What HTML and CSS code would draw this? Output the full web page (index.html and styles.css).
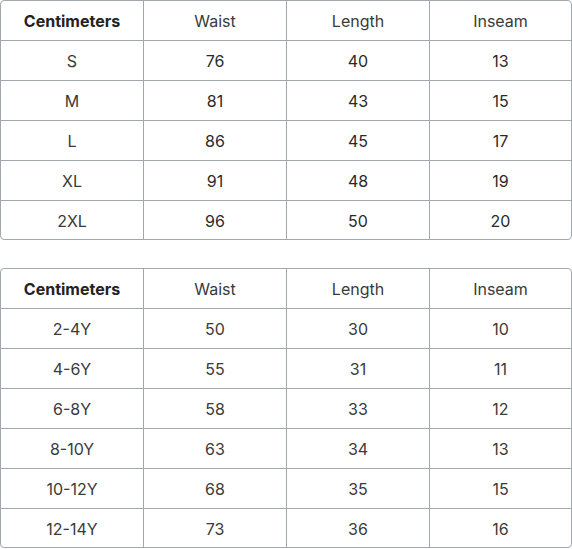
FILE: index.html
```html
<!DOCTYPE html>
<html>
<head>
<meta charset="utf-8">
<link rel="stylesheet" href="styles.css">
</head>
<body>
<div class="page">
  <div class="size-table strong">
    <div class="row head"><div class="cell first">Centimeters</div><div class="cell">Waist</div><div class="cell">Length</div><div class="cell">Inseam</div></div>
    <div class="row"><div class="cell">S</div><div class="cell num">76</div><div class="cell num">40</div><div class="cell num">13</div></div>
    <div class="row"><div class="cell">M</div><div class="cell num">81</div><div class="cell num">43</div><div class="cell num">15</div></div>
    <div class="row"><div class="cell">L</div><div class="cell num">86</div><div class="cell num">45</div><div class="cell num">17</div></div>
    <div class="row"><div class="cell">XL</div><div class="cell num">91</div><div class="cell num">48</div><div class="cell num">19</div></div>
    <div class="row"><div class="cell">2XL</div><div class="cell num">96</div><div class="cell num">50</div><div class="cell num">20</div></div>
  </div>
  <div class="size-table">
    <div class="row head"><div class="cell first">Centimeters</div><div class="cell">Waist</div><div class="cell">Length</div><div class="cell">Inseam</div></div>
    <div class="row"><div class="cell">2-4Y</div><div class="cell num">50</div><div class="cell num">30</div><div class="cell num">10</div></div>
    <div class="row"><div class="cell">4-6Y</div><div class="cell num">55</div><div class="cell num">31</div><div class="cell num">11</div></div>
    <div class="row"><div class="cell">6-8Y</div><div class="cell num">58</div><div class="cell num">33</div><div class="cell num">12</div></div>
    <div class="row"><div class="cell">8-10Y</div><div class="cell num">63</div><div class="cell num">34</div><div class="cell num">13</div></div>
    <div class="row"><div class="cell">10-12Y</div><div class="cell num">68</div><div class="cell num">35</div><div class="cell num">15</div></div>
    <div class="row"><div class="cell">12-14Y</div><div class="cell num">73</div><div class="cell num">36</div><div class="cell num">16</div></div>
  </div>
</div>
</body>
</html>
```
FILE: styles.css
```css
* { box-sizing: border-box; }
html, body { margin: 0; padding: 0; background: #ffffff; }
body {
  font-family: Inter, "Noto Sans", sans-serif;
  font-size: 16px;
  color: #333333;
}
.page {
  width: 572px;
  display: flex;
  flex-direction: column;
  gap: 28px;
}
.size-table {
  border: 1px solid #a3a7ae;
  border-radius: 4px;
  overflow: hidden;
}
.row {
  display: grid;
  grid-template-columns: 143px 143px 143px 1fr;
  height: 40px;
  border-bottom: 1px solid #a3a7ae;
}
.row:last-child {
  border-bottom: none;
  height: 38px;
}
.cell {
  display: flex;
  align-items: center;
  justify-content: center;
  border-right: 1px solid #a3a7ae;
  color: #3a3a3a;
  padding-top: 1px;
}
.cell:last-child { border-right: none; }
.head .cell { color: #3a3a3a; }
.head .first { font-weight: 700; color: #222222; }
.strong .num { color: #2a2a2a; }
```
